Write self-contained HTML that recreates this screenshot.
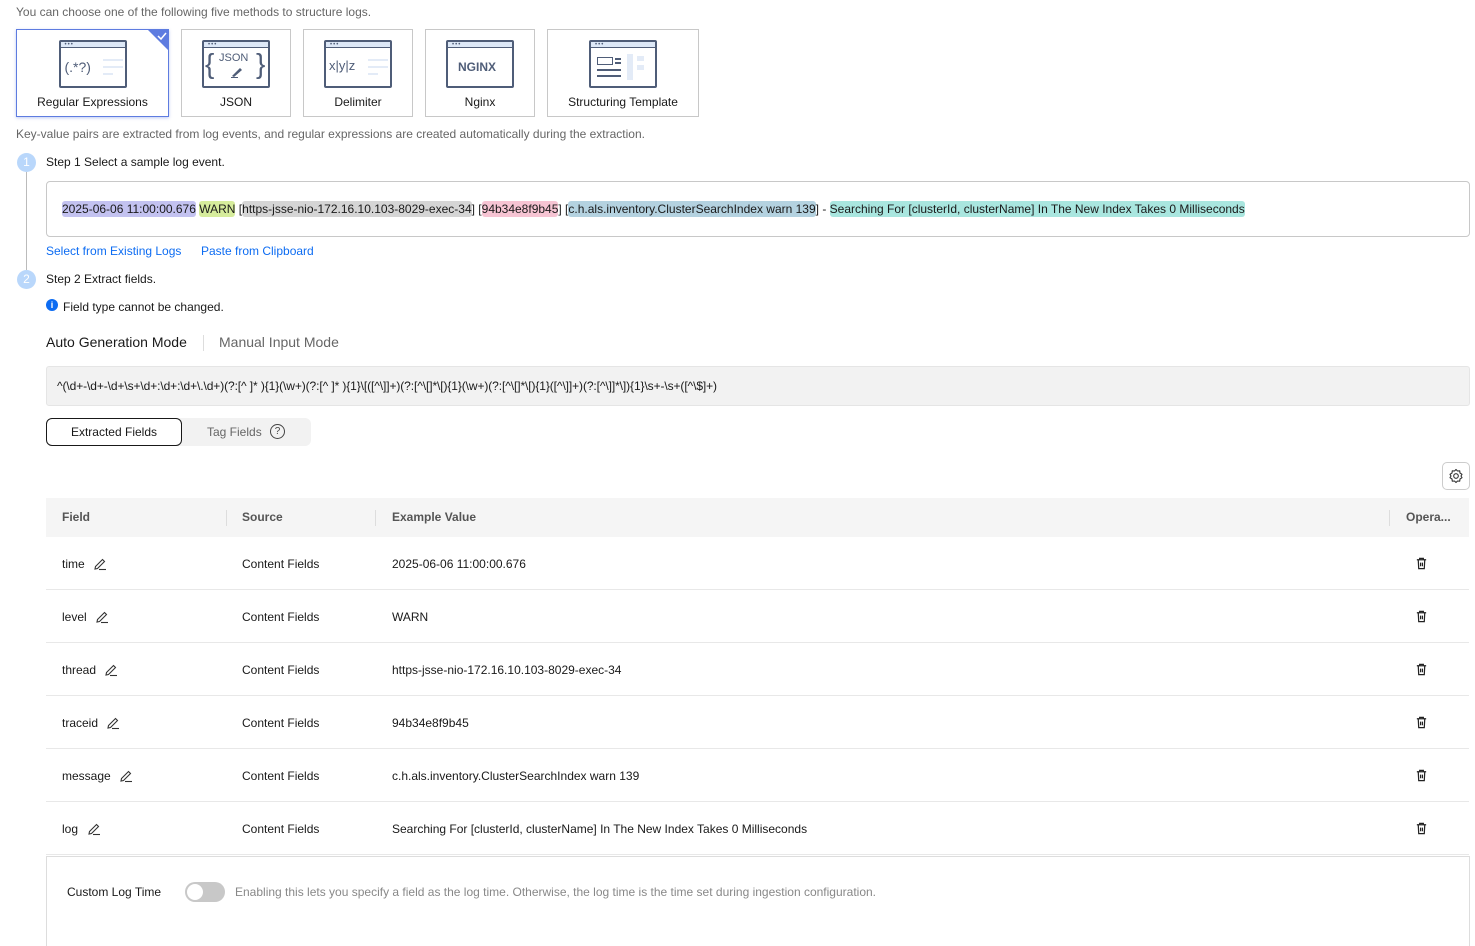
<!DOCTYPE html>
<html><head><meta charset="utf-8"><style>
*{box-sizing:border-box;margin:0;padding:0}
body{width:1475px;height:931px;overflow:hidden;background:#fff;font-family:"Liberation Sans",Arial,sans-serif;font-size:12px;color:#191919;position:relative}
.a{position:absolute;white-space:nowrap}
.card{position:absolute;top:29px;height:88px;border:1px solid #c8c8c8;background:#fff}
.card.sel{border-color:#5e7ce0;box-shadow:0 1px 3px rgba(94,124,224,.4)}
.card .lbl{position:absolute;left:0;right:0;top:65px;text-align:center;font-size:12px;color:#191919}
.ic{position:absolute;top:10px;left:50%;margin-left:-34px;width:68px;height:48px;border:2px solid #4f5d78;border-radius:2px;background:#fff}
.ic .bar{position:absolute;left:0;right:0;top:0;height:6px;background:#dde8f7;border-bottom:1.5px solid #4f5d78}
.ic .dots{position:absolute;left:4px;top:1px;font-size:6px;line-height:4px;color:#4f5d78;letter-spacing:1px}
.hl{border-radius:3px;padding:1px 0}
.th{position:absolute;top:498px;height:39px;left:46px;width:1423px;background:#f5f5f5}
.row{position:absolute;left:46px;width:1423px;height:53px;border-bottom:1px solid #e8e8e8}
.row span{position:absolute;top:20px;font-size:12px;color:#191919}
.sep{position:absolute;top:12px;width:1px;height:16px;background:#ddd}
</style></head><body>
<div class="a" style="left:16px;top:5px;color:#666">You can choose one of the following five methods to structure logs.</div>

<div class="card sel" style="left:16px;width:153px">
 <div class="ic"><div class="bar"><div class="dots">•••</div></div>
  <div class="a" style="left:4px;top:17px;font-size:14px;color:#4f5d78">(.*?)</div>
  <div class="a" style="left:42px;top:17px;width:20px;height:2px;background:#e3ebf7"></div>
  <div class="a" style="left:42px;top:24px;width:20px;height:2px;background:#e3ebf7"></div>
  <div class="a" style="left:42px;top:31px;width:10px;height:2px;background:#e3ebf7"></div>
 </div>
 <svg class="a" style="right:-1px;top:-1px" width="22" height="22"><polygon points="0,0 22,0 22,22" fill="#5e7ce0"/><path d="M11 7 L14 10 L19 4" stroke="#fff" stroke-width="1.5" fill="none"/></svg>
 <div class="lbl">Regular Expressions</div></div>

<div class="card" style="left:181px;width:110px">
 <div class="ic"><div class="bar"><div class="dots">•••</div></div>
  <div class="a" style="left:1px;top:6px;font-size:28px;color:#4f5d78;font-weight:300">{</div>
  <div class="a" style="left:52px;top:6px;font-size:28px;color:#4f5d78;font-weight:300">}</div>
  <div class="a" style="left:15px;top:10px;font-size:11px;color:#4f5d78">JSON</div>
  <svg class="a" style="left:26px;top:24px" width="14" height="12"><path d="M2 10 L10 2 L12 4 L4 11Z" fill="#4f5d78"/><path d="M1 11.5 H8" stroke="#4f5d78"/></svg>
 </div><div class="lbl">JSON</div></div>

<div class="card" style="left:303px;width:110px">
 <div class="ic"><div class="bar"><div class="dots">•••</div></div>
  <div class="a" style="left:3px;top:16px;font-size:13px;color:#4f5d78">x|y|z</div>
  <div class="a" style="left:42px;top:17px;width:20px;height:2px;background:#e3ebf7"></div>
  <div class="a" style="left:42px;top:24px;width:20px;height:2px;background:#e3ebf7"></div>
  <div class="a" style="left:42px;top:31px;width:10px;height:2px;background:#e3ebf7"></div>
 </div><div class="lbl">Delimiter</div></div>

<div class="card" style="left:425px;width:110px">
 <div class="ic"><div class="bar"><div class="dots">•••</div></div>
  <div class="a" style="left:10px;top:18px;font-size:12px;font-weight:bold;color:#4f5d78">NGINX</div>
 </div><div class="lbl">Nginx</div></div>

<div class="card" style="left:547px;width:152px">
 <div class="ic"><div class="bar"><div class="dots">•••</div></div>
  <div class="a" style="left:6px;top:15px;width:16px;height:8px;border:1.5px solid #4f5d78"></div>
  <div class="a" style="left:24px;top:16px;width:6px;height:1.5px;background:#4f5d78"></div>
  <div class="a" style="left:24px;top:20px;width:6px;height:1.5px;background:#4f5d78"></div>
  <div class="a" style="left:6px;top:27px;width:24px;height:1.5px;background:#4f5d78"></div>
  <div class="a" style="left:6px;top:33px;width:24px;height:1.5px;background:#4f5d78"></div>
  <div class="a" style="left:36px;top:12px;width:6px;height:26px;background:#e3ebf7"></div>
  <div class="a" style="left:46px;top:14px;width:7px;height:5px;background:#e3ebf7"></div>
  <div class="a" style="left:46px;top:23px;width:7px;height:5px;background:#e3ebf7"></div>
 </div><div class="lbl">Structuring Template</div></div>

<div class="a" style="left:16px;top:127px;color:#666">Key-value pairs are extracted from log events, and regular expressions are created automatically during the extraction.</div>

<div class="a" style="left:26px;top:172px;width:1px;height:98px;background:#bbb"></div>
<div class="a" style="left:17px;top:153px;width:19px;height:19px;border-radius:50%;background:#b9d7fb;color:#fff;text-align:center;line-height:19px;font-size:12px">1</div>
<div class="a" style="left:46px;top:155px">Step 1 Select a sample log event.</div>

<div class="a" style="left:46px;top:181px;width:1424px;height:56px;border:1px solid #c8c8c8;border-radius:4px"></div>
<div class="a" style="left:62px;top:202px">
<span class="hl" style="background:#c3c2f0">2025-06-06 11:00:00.676</span> <span class="hl" style="background:#d6ec9c">WARN</span> [<span class="hl" style="background:#d5d5d5">https-jsse-nio-172.16.10.103-8029-exec-34</span>] [<span class="hl" style="background:#f6c4d3">94b34e8f9b45</span>] [<span class="hl" style="background:#b4d2e0">c.h.als.inventory.ClusterSearchIndex warn 139</span>] - <span class="hl" style="background:#a9e6df">Searching For [clusterId, clusterName] In The New Index Takes 0 Milliseconds</span></div>

<div class="a" style="left:46px;top:244px;color:#0d6cf2">Select from Existing Logs</div>
<div class="a" style="left:201px;top:244px;color:#0d6cf2">Paste from Clipboard</div>

<div class="a" style="left:17px;top:270px;width:19px;height:19px;border-radius:50%;background:#b9d7fb;color:#fff;text-align:center;line-height:19px;font-size:12px">2</div>
<div class="a" style="left:46px;top:272px">Step 2 Extract fields.</div>

<div class="a" style="left:46px;top:299px;width:12px;height:12px;border-radius:50%;background:#0d6cf2;color:#fff;font-size:9px;text-align:center;line-height:12px;font-weight:bold">i</div>
<div class="a" style="left:63px;top:300px">Field type cannot be changed.</div>

<div class="a" style="left:46px;top:334px;font-size:14px;color:#191919">Auto Generation Mode</div>
<div class="a" style="left:203px;top:335px;width:1px;height:16px;background:#ddd"></div>
<div class="a" style="left:219px;top:334px;font-size:14px;color:#666">Manual Input Mode</div>

<div class="a" style="left:46px;top:366px;width:1424px;height:40px;background:#f2f2f2;border:1px solid #e5e5e5;border-radius:3px"></div>
<div class="a" style="left:57px;top:379px;font-size:12px;letter-spacing:-0.1px">^(\d+-\d+-\d+\s+\d+:\d+:\d+\.\d+)(?:[^ ]* ){1}(\w+)(?:[^ ]* ){1}\[([^\]]+)(?:[^\[]*\[){1}(\w+)(?:[^\[]*\[){1}([^\]]+)(?:[^\]]*\]){1}\s+-\s+([^\$]+)</div>

<div class="a" style="left:46px;top:418px;width:265px;height:28px;background:#f2f2f2;border-radius:6px"></div>
<div class="a" style="left:46px;top:418px;width:136px;height:28px;background:#fff;border:1px solid #191919;border-radius:6px;text-align:center;line-height:26px">Extracted Fields</div>
<div class="a" style="left:207px;top:425px;color:#666">Tag Fields</div>
<div class="a" style="left:270px;top:424px;width:15px;height:15px;border:1.2px solid #444;border-radius:50%;text-align:center;font-size:10px;line-height:13px;color:#444">?</div>

<div class="a" style="left:1442px;top:462px;width:28px;height:28px;border:1px solid #ccc;border-radius:5px"></div>
<svg class="a" style="left:1448px;top:468px" width="16" height="16" viewBox="0 0 16 16"><path d="M8 1.5 L9.5 3 L11.7 2.8 L12 5 L14 6.3 L13 8 L14 9.7 L12 11 L11.7 13.2 L9.5 13 L8 14.5 L6.5 13 L4.3 13.2 L4 11 L2 9.7 L3 8 L2 6.3 L4 5 L4.3 2.8 L6.5 3Z" fill="none" stroke="#333" stroke-width="1.1" stroke-linejoin="round"/><circle cx="8" cy="8" r="2.3" fill="none" stroke="#333" stroke-width="1.1"/></svg>

<div class="th">
 <div class="a" style="left:16px;top:12px;color:#555;font-weight:bold">Field</div>
 <div class="sep" style="left:180px"></div>
 <div class="a" style="left:196px;top:12px;color:#555;font-weight:bold">Source</div>
 <div class="sep" style="left:329px"></div>
 <div class="a" style="left:346px;top:12px;color:#555;font-weight:bold">Example Value</div>
 <div class="sep" style="left:1343px"></div>
 <div class="a" style="left:1360px;top:12px;color:#555;font-weight:bold">Opera...</div>
</div>

<div class="row" style="top:537px"><span style="left:16px">time</span><span style="left:196px">Content Fields</span><span style="left:346px">2025-06-06 11:00:00.676</span></div>
<div class="row" style="top:590px"><span style="left:16px">level</span><span style="left:196px">Content Fields</span><span style="left:346px">WARN</span></div>
<div class="row" style="top:643px"><span style="left:16px">thread</span><span style="left:196px">Content Fields</span><span style="left:346px">https-jsse-nio-172.16.10.103-8029-exec-34</span></div>
<div class="row" style="top:696px"><span style="left:16px">traceid</span><span style="left:196px">Content Fields</span><span style="left:346px">94b34e8f9b45</span></div>
<div class="row" style="top:749px"><span style="left:16px">message</span><span style="left:196px">Content Fields</span><span style="left:346px">c.h.als.inventory.ClusterSearchIndex warn 139</span></div>
<div class="row" style="top:802px"><span style="left:16px">log</span><span style="left:196px">Content Fields</span><span style="left:346px">Searching For [clusterId, clusterName] In The New Index Takes 0 Milliseconds</span></div>

<svg width="0" height="0" style="position:absolute"><defs>
<symbol id="pen" viewBox="0 0 14 14"><path d="M2 12 L2.5 9.5 L9.5 2.5 L11.5 4.5 L4.5 11.5Z" fill="none" stroke="#333" stroke-width="1.1"/><path d="M6 12.5 H13" stroke="#333" stroke-width="1.1"/></symbol>
<symbol id="bin" viewBox="0 0 14 14"><path d="M2 3 H12 M5 3 V1.5 H9 V3 M3.5 3 L4 12.5 H10 L10.5 3 M6 6 V10 M8 6 V10" fill="none" stroke="#222" stroke-width="1.3"/></symbol></defs></svg>

<svg class="a" style="left:93px;top:557px" width="14" height="14"><use href="#pen"/></svg>
<svg class="a" style="left:95px;top:610px" width="14" height="14"><use href="#pen"/></svg>
<svg class="a" style="left:104px;top:663px" width="14" height="14"><use href="#pen"/></svg>
<svg class="a" style="left:106px;top:716px" width="14" height="14"><use href="#pen"/></svg>
<svg class="a" style="left:119px;top:769px" width="14" height="14"><use href="#pen"/></svg>
<svg class="a" style="left:87px;top:822px" width="14" height="14"><use href="#pen"/></svg>

<svg class="a" style="left:1415px;top:557px" width="13" height="13"><use href="#bin"/></svg>
<svg class="a" style="left:1415px;top:610px" width="13" height="13"><use href="#bin"/></svg>
<svg class="a" style="left:1415px;top:663px" width="13" height="13"><use href="#bin"/></svg>
<svg class="a" style="left:1415px;top:716px" width="13" height="13"><use href="#bin"/></svg>
<svg class="a" style="left:1415px;top:769px" width="13" height="13"><use href="#bin"/></svg>
<svg class="a" style="left:1415px;top:822px" width="13" height="13"><use href="#bin"/></svg>

<div class="a" style="left:46px;top:856px;width:1424px;height:90px;border:1px solid #ddd;border-bottom:none"></div>
<div class="a" style="left:67px;top:885px">Custom Log Time</div>
<div class="a" style="left:185px;top:882px;width:40px;height:20px;border-radius:10px;background:#c8c8c8"></div>
<div class="a" style="left:187px;top:884px;width:16px;height:16px;border-radius:50%;background:#fff"></div>
<div class="a" style="left:235px;top:885px;color:#888">Enabling this lets you specify a field as the log time. Otherwise, the log time is the time set during ingestion configuration.</div>
</body></html>
